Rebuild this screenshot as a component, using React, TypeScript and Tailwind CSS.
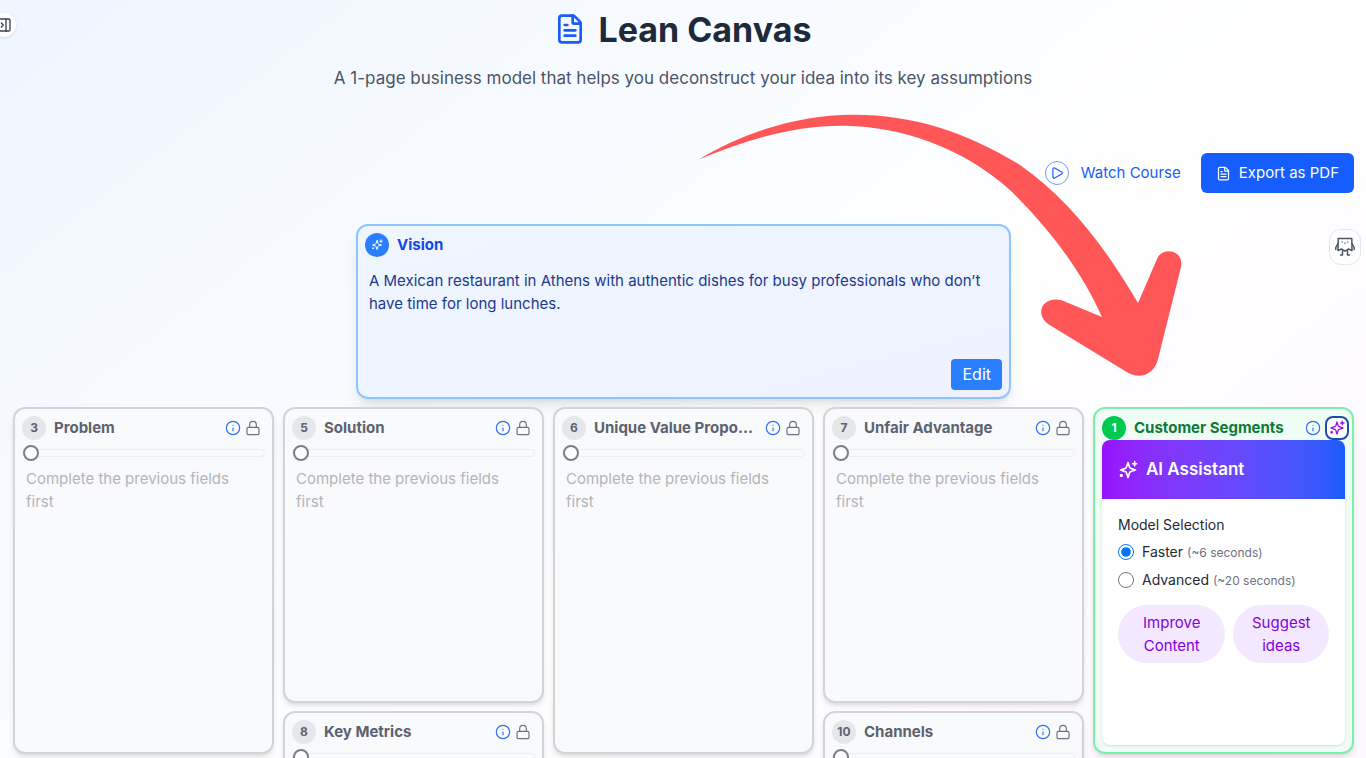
import { FileText, Info, Lock, PanelRightClose, Play } from "lucide-react";
import { useState } from "react";

function SparkleIcon({ className }: { className?: string }) {
  return (
    <svg
      className={className}
      viewBox="0 0 24 24"
      fill="none"
      stroke="currentColor"
      strokeWidth="2"
      strokeLinecap="round"
      strokeLinejoin="round"
      aria-hidden="true"
    >
      <path d="M12 3l-1.900 5.800a2 2 0 0 1-1.300 1.300L3 12l5.800 1.900a2 2 0 0 1 1.300 1.300L12 21l1.900-5.800a2 2 0 0 1 1.300-1.300L21 12l-5.800-1.900a2 2 0 0 1-1.300-1.300Z" />
      <path d="M20 2v5M22.500 4.500h-5" />
      <circle cx="4" cy="18.500" r="1" fill="currentColor" />
    </svg>
  );
}

function Mascot() {
  return (
    <svg
      className="h-5 w-5"
      viewBox="0 0 20 20"
      fill="none"
      stroke="#4b5563"
      strokeWidth="1.500"
      strokeLinecap="round"
      strokeLinejoin="round"
      aria-hidden="true"
    >
      <path d="M3.200 1.500H16.800L17 13.700 13.600 12 10 14.200 6.400 12 3 13.700Z" />
      <path d="M3 6.500.8 10.500V12.500M17 6.500l2.200 4V12.500M7.500 13.500v4.500H5.500M12.500 13.500v4.500h2" />
      <path strokeWidth="1" d="M7 5h.5M12.500 5h.5M9.200 6c.4.500 1.200.5 1.600 0" />
    </svg>
  );
}

function CurvedArrow() {
  return (
    <svg
      className="pointer-events-none absolute left-1/2 top-[114px] ml-4 h-[263px] w-[484px]"
      viewBox="699 114 484 263"
      fill="#ff5757"
      aria-hidden="true"
    >
      <path d="M698 160C745 131 800 115 853 114.700C912 114.500 967 132 1020 165C1070 200 1107 250 1138 303L1157 259C1161 247 1184 248 1181 267L1158 359C1154 376 1138 380 1125 371L1048 324C1034 313 1043 296 1061 300L1102 317C1082 272 1050 229 1010 190C962 147 902 127 845 125.700C795 125 745 140 698 160Z" />
    </svg>
  );
}

function InfoButton({ label }: { label: string }) {
  return (
    <button type="button" aria-label={`About ${label}`} className="shrink-0 text-[#2f6fed]">
      <Info className="h-4 w-4" strokeWidth={1.75} />
    </button>
  );
}

type CardProps = { step: number; title: string; className: string };

function LockedCard({ step, title, className }: CardProps) {
  return (
    <section
      className={`flex flex-col rounded-xl border-2 border-[#d1d5db] bg-[#f9fafb] p-[7px] shadow-md ${className}`}
    >
      <header className="flex h-6 items-center">
        <span className="mr-2 flex h-6 w-6 shrink-0 items-center justify-center rounded-full bg-[#e5e7eb] text-xs font-bold text-[#5b6270]">
          {step}
        </span>
        <h2 className="min-w-0 flex-1 whitespace-nowrap text-[15px] font-bold text-[#5b6270]">{title}</h2>
        <div className="flex items-center gap-1 pr-1">
          <InfoButton label={title} />
          <Lock className="h-4 w-4 text-[#6b7280]" strokeWidth={1.75} aria-label="Locked" />
        </div>
      </header>
      <input
        type="range"
        min={0}
        max={100}
        defaultValue={0}
        disabled
        aria-label={`${title} confidence`}
        className="mt-[9px] h-2 w-full shrink-0 appearance-none rounded-full border border-[#eceef1] bg-[#f9fafb] [&::-webkit-slider-thumb]:h-4 [&::-webkit-slider-thumb]:w-4 [&::-webkit-slider-thumb]:appearance-none [&::-webkit-slider-thumb]:rounded-full [&::-webkit-slider-thumb]:border-2 [&::-webkit-slider-thumb]:border-[#7b7f86] [&::-webkit-slider-thumb]:bg-white"
      />
      <textarea
        disabled
        aria-label={title}
        placeholder="Complete the previous fields first"
        className="mt-[10px] min-h-0 w-full flex-1 resize-none bg-transparent pl-1 pr-5 text-[15px] leading-[23px] placeholder:text-[#b1b5bb]"
      />
    </section>
  );
}

function SegmentsCard() {
  const [model, setModel] = useState("faster");
  return (
    <section className="flex h-[347px] flex-col rounded-xl border-2 border-[#7bf1a8] bg-[#f0fdf4] p-[7px] shadow-md">
      <header className="flex h-6 items-center">
        <span className="mr-2 flex h-6 w-6 shrink-0 items-center justify-center rounded-full bg-[#00c950] text-xs font-bold text-white">
          1
        </span>
        <h2 className="min-w-0 flex-1 whitespace-nowrap text-[15px] font-bold text-[#0d7a37]">Customer Segments</h2>
        <div className="-mr-1 flex items-center gap-1">
          <InfoButton label="Customer Segments" />
          <button
            type="button"
            aria-label="AI Assistant"
            className="flex h-6 w-6 items-center justify-center rounded-lg border-2 border-[#1c4fa8] bg-white text-[#9810fa]"
          >
            <SparkleIcon className="h-4 w-4 shrink-0" />
          </button>
        </div>
      </header>
      <div className="flex min-h-0 flex-1 flex-col overflow-hidden rounded-lg bg-white shadow-sm">
        <div className="flex h-[59px] shrink-0 items-center gap-2 bg-linear-to-r from-[#9810fa] to-[#155dfc] px-4 text-white">
          <SparkleIcon className="h-5 w-5" />
          <h3 className="text-[17px] font-semibold">AI Assistant</h3>
        </div>
        <div className="p-4">
          <fieldset className="text-sm text-[#1f2937]">
            <legend className="leading-5">Model Selection</legend>
            <label className="mt-[7px] flex h-5 items-center gap-2">
              <input
                type="radio"
                name="model"
                className="h-4 w-4"
                checked={model === "faster"}
                onChange={() => setModel("faster")}
              />
              <span>
                Faster <span className="text-xs text-[#6b7280]">(~6 seconds)</span>
              </span>
            </label>
            <label className="mt-2 flex h-5 items-center gap-2">
              <input
                type="radio"
                name="model"
                className="h-4 w-4"
                checked={model === "advanced"}
                onChange={() => setModel("advanced")}
              />
              <span>
                Advanced <span className="text-xs text-[#6b7280]">(~20 seconds)</span>
              </span>
            </label>
          </fieldset>
          <div className="mt-[15px] grid grid-cols-[9fr_8fr] gap-2 text-[15px] leading-[23px] text-[#8200db]">
            <button type="button" className="rounded-full bg-[#f3e8ff] px-4 py-[6px]">
              Improve Content
            </button>
            <button type="button" className="rounded-full bg-[#f3e8ff] px-4 py-[6px]">
              Suggest ideas
            </button>
          </div>
        </div>
      </div>
    </section>
  );
}

export default function App() {
  return (
    <div className="relative h-screen overflow-hidden bg-linear-to-br from-[#eff6ff] via-white to-[#faf5ff] bg-[length:100%_140%] bg-no-repeat font-['Inter',sans-serif]">
      <header className="pt-[7px] text-center">
        <h1 className="flex h-11 items-center justify-center gap-3 text-[34px] font-bold text-[#1e2939]">
          <FileText className="h-8 w-8 text-[#155dfc]" />
          Lean Canvas
        </h1>
        <p className="mt-[13px] text-[17px] leading-7 text-[#4a5565]">
          A 1-page business model that helps you deconstruct your idea into its key assumptions
        </p>
      </header>

      <div className="mt-[61px] flex items-center justify-end gap-5 px-3 text-[15px]">
        <a href="#course" className="flex items-center gap-3 text-[#155dfc]">
          <span className="flex h-6 w-6 items-center justify-center rounded-full border border-[#6e9bfb]">
            <Play className="h-[14px] w-[14px]" strokeWidth={2} />
          </span>
          Watch Course
        </a>
        <button type="button" className="flex h-10 items-center gap-2 rounded-md bg-[#155dfc] px-[15px] text-white">
          <FileText className="h-[15px] w-[15px]" />
          Export as PDF
        </button>
      </div>

      <main className="pl-[13px] pr-3 pt-[31px]">
        <section className="mx-auto flex h-[175px] w-[655px] max-w-full flex-col rounded-xl border-2 border-[#8ec5ff] bg-linear-to-br from-[#eff6ff] to-[#eef2ff] p-[7px] shadow-lg">
          <header className="flex h-6 items-center gap-2">
            <span className="flex h-6 w-6 items-center justify-center rounded-full bg-[#2b7fff] text-white">
              <SparkleIcon className="h-3 w-3" />
            </span>
            <h2 className="text-[15px] font-bold text-[#1447e6]">Vision</h2>
          </header>
          <p className="mt-3 flex-1 px-1 text-[15px] leading-[23px] text-[#1c398e]">
            A Mexican restaurant in Athens with authentic dishes for busy professionals who don’t have time for long
            lunches.
          </p>
          <button type="button" className="self-end rounded bg-[#2b7fff] px-[11px] py-1 leading-[23px] text-white">
            Edit
          </button>
        </section>

        <div className="mt-2 grid grid-cols-5 items-start gap-[9px]">
          <LockedCard step={3} title="Problem" className="h-[347px]" />
          <div className="grid gap-2">
            <LockedCard step={5} title="Solution" className="h-[296px]" />
            <LockedCard step={8} title="Key Metrics" className="h-[296px]" />
          </div>
          <LockedCard step={6} title="Unique Value Propo..." className="h-[347px]" />
          <div className="grid gap-2">
            <LockedCard step={7} title="Unfair Advantage" className="h-[296px]" />
            <LockedCard step={10} title="Channels" className="h-[296px]" />
          </div>
          <SegmentsCard />
        </div>
      </main>

      <CurvedArrow />

      <button
        type="button"
        aria-label="Open sidebar"
        className="absolute -left-2 top-[13px] flex h-6 w-6 items-center justify-center rounded-full bg-white text-[#374151] shadow"
      >
        <PanelRightClose className="h-4 w-4" />
      </button>
      <button
        type="button"
        aria-label="Open assistant"
        className="absolute right-[5px] top-[229px] flex h-9 w-8 items-center justify-center rounded-xl border border-[#e5e7eb] bg-white"
      >
        <Mascot />
      </button>
    </div>
  );
}
